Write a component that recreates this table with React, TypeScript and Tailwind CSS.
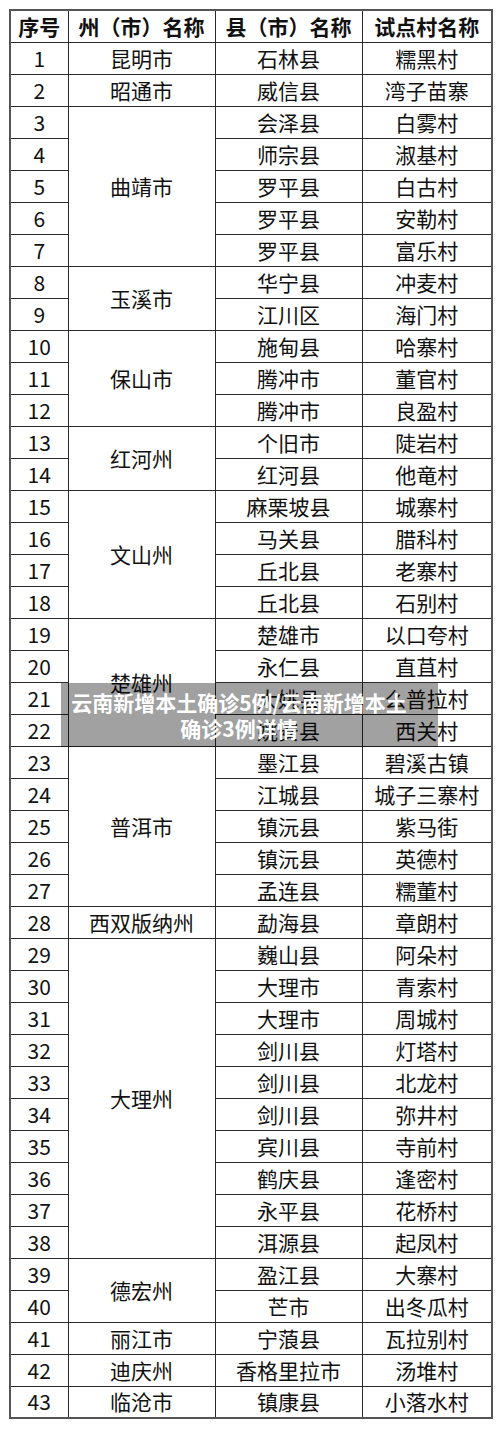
import React from "react";

type Row = { n: number; city?: string; span?: number; county: string; village: string };

const rows: Row[] = [
  { n: 1, city: "昆明市", span: 1, county: "石林县", village: "糯黑村" },
  { n: 2, city: "昭通市", span: 1, county: "威信县", village: "湾子苗寨" },
  { n: 3, city: "曲靖市", span: 5, county: "会泽县", village: "白雾村" },
  { n: 4, county: "师宗县", village: "淑基村" },
  { n: 5, county: "罗平县", village: "白古村" },
  { n: 6, county: "罗平县", village: "安勒村" },
  { n: 7, county: "罗平县", village: "富乐村" },
  { n: 8, city: "玉溪市", span: 2, county: "华宁县", village: "冲麦村" },
  { n: 9, county: "江川区", village: "海门村" },
  { n: 10, city: "保山市", span: 3, county: "施甸县", village: "哈寨村" },
  { n: 11, county: "腾冲市", village: "董官村" },
  { n: 12, county: "腾冲市", village: "良盈村" },
  { n: 13, city: "红河州", span: 2, county: "个旧市", village: "陡岩村" },
  { n: 14, county: "红河县", village: "他竜村" },
  { n: 15, city: "文山州", span: 4, county: "麻栗坡县", village: "城寨村" },
  { n: 16, county: "马关县", village: "腊科村" },
  { n: 17, county: "丘北县", village: "老寨村" },
  { n: 18, county: "丘北县", village: "石别村" },
  { n: 19, city: "楚雄州", span: 4, county: "楚雄市", village: "以口夸村" },
  { n: 20, county: "永仁县", village: "直苴村" },
  { n: 21, county: "大姚县", village: "么普拉村" },
  { n: 22, county: "姚安县", village: "西关村" },
  { n: 23, city: "普洱市", span: 5, county: "墨江县", village: "碧溪古镇" },
  { n: 24, county: "江城县", village: "城子三寨村" },
  { n: 25, county: "镇沅县", village: "紫马街" },
  { n: 26, county: "镇沅县", village: "英德村" },
  { n: 27, county: "孟连县", village: "糯董村" },
  { n: 28, city: "西双版纳州", span: 1, county: "勐海县", village: "章朗村" },
  { n: 29, city: "大理州", span: 10, county: "巍山县", village: "阿朵村" },
  { n: 30, county: "大理市", village: "青索村" },
  { n: 31, county: "大理市", village: "周城村" },
  { n: 32, county: "剑川县", village: "灯塔村" },
  { n: 33, county: "剑川县", village: "北龙村" },
  { n: 34, county: "剑川县", village: "弥井村" },
  { n: 35, county: "宾川县", village: "寺前村" },
  { n: 36, county: "鹤庆县", village: "逢密村" },
  { n: 37, county: "永平县", village: "花桥村" },
  { n: 38, county: "洱源县", village: "起凤村" },
  { n: 39, city: "德宏州", span: 2, county: "盈江县", village: "大寨村" },
  { n: 40, county: "芒市", village: "出冬瓜村" },
  { n: 41, city: "丽江市", span: 1, county: "宁蒗县", village: "瓦拉别村" },
  { n: 42, city: "迪庆州", span: 1, county: "香格里拉市", village: "汤堆村" },
  { n: 43, city: "临沧市", span: 1, county: "镇康县", village: "小落水村" },
];

const cell = "border border-[#2a2a2a] text-center align-middle p-0 leading-none";

export default function App() {
  return (
    <div
      className="relative w-[500px] h-[1429px] bg-white text-[#111111]"
      style={{ fontFamily: '"Noto Sans CJK SC", "Noto Sans", sans-serif' }}
    >
      <div className="pt-[9px] pl-[9px]">
        <table className="table-fixed border-collapse w-[482px] border-2 border-[#555555] text-[21px]">
          <colgroup>
            <col className="w-[58px]" />
            <col className="w-[147px]" />
            <col className="w-[147px]" />
            <col className="w-[130px]" />
          </colgroup>
          <thead>
            <tr className="h-[32px]">
              <th className={`${cell} font-bold`}>序号</th>
              <th className={`${cell} font-bold`}>州（市）名称</th>
              <th className={`${cell} font-bold`}>县（市）名称</th>
              <th className={`${cell} font-bold`}>试点村名称</th>
            </tr>
          </thead>
          <tbody>
            {rows.map((r) => (
              <tr key={r.n} className="h-[32px]">
                <td className={cell}>{r.n}</td>
                {r.city !== undefined && (
                  <td className={cell} rowSpan={r.span}>
                    {r.city}
                  </td>
                )}
                <td className={cell}>{r.county}</td>
                <td className={cell}>{r.village}</td>
              </tr>
            ))}
          </tbody>
        </table>
      </div>
      <div className="absolute left-[61px] top-[683px] w-[377px] h-[64px] bg-black/[0.37] flex items-center justify-center pr-[21px]">
        <p className="text-white font-bold text-[21px] leading-[26px] text-center whitespace-nowrap">
          云南新增本土确诊5例/云南新增本土
          <br />
          确诊3例详情
        </p>
      </div>
    </div>
  );
}
